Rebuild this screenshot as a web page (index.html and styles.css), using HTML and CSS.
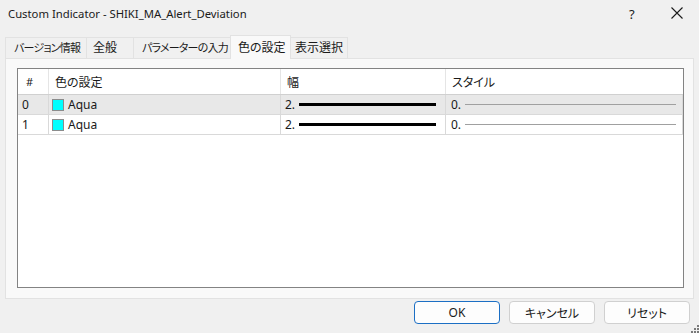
FILE: index.html
```html
<html>
<head>
<meta charset="utf-8">
<link rel="stylesheet" href="styles.css">
</head>
<body>
<div class="window">
  <div class="titlebar">
    <span class="title">Custom Indicator - SHIKI_MA_Alert_Deviation</span>
    <span class="help">?</span>
    <span class="close">
      <svg width="12" height="12" viewBox="0 0 12 12"><path d="M0.5 0.5 L11.5 11.5 M11.5 0.5 L0.5 11.5" stroke="#1a1a1a" stroke-width="1.1" fill="none"/></svg>
    </span>
  </div>

  <div class="tabs">
    <div class="tab t-version kana">バージョン情報</div>
    <div class="tab t-general">全般</div>
    <div class="tab t-params kana">パラメーターの入力</div>
    <div class="tab t-colors active">色の設定</div>
    <div class="tab t-display">表示選択</div>
  </div>

  <div class="panel">
    <div class="list">
      <div class="row head">
        <div class="cell num">#</div>
        <div class="cell color">色の設定</div>
        <div class="cell width">幅</div>
        <div class="cell style">スタイル</div>
      </div>
      <div class="row sel">
        <div class="cell num">0</div>
        <div class="cell color"><span class="swatch"></span>Aqua</div>
        <div class="cell width">2.<span class="line thick"></span></div>
        <div class="cell style">0.<span class="line thin"></span></div>
      </div>
      <div class="row">
        <div class="cell num">1</div>
        <div class="cell color"><span class="swatch"></span>Aqua</div>
        <div class="cell width">2.<span class="line thick"></span></div>
        <div class="cell style">0.<span class="line thin"></span></div>
      </div>
    </div>
  </div>

  <div class="buttons">
    <button class="btn default">OK</button>
    <button class="btn">キャンセル</button>
    <button class="btn">リセット</button>
  </div>

  <svg class="grip" width="8" height="8" viewBox="0 0 8 8">
    <rect x="6" y="0" width="2" height="2" fill="#7a7a7a"/>
    <rect x="3" y="3" width="2" height="2" fill="#7a7a7a"/>
    <rect x="6" y="3" width="2" height="2" fill="#7a7a7a"/>
    <rect x="0" y="6" width="2" height="2" fill="#7a7a7a"/>
    <rect x="3" y="6" width="2" height="2" fill="#7a7a7a"/>
    <rect x="6" y="6" width="2" height="2" fill="#7a7a7a"/>
  </svg>
</div>
</body>
</html>
```

FILE: styles.css
```css
* {
  box-sizing: border-box;
}

body {
  margin: 0;
  background: #f0f0f0;
  font-family: "Noto Sans", "Noto Sans CJK JP", sans-serif;
  font-size: 12px;
  color: #1a1a1a;
  font-feature-settings: "palt";
}

.window {
  position: relative;
  width: 699px;
  height: 333px;
  overflow: hidden;
}

/* title bar */
.titlebar {
  height: 30px;
  display: flex;
  align-items: center;
  padding-left: 8px;
}

.title {
  flex: 1;
  font-size: 11.3px;
  padding-bottom: 3px;
}

.help {
  width: 14px;
  margin-right: 28px;
  font-size: 13px;
  padding-bottom: 3px;
}

.close {
  width: 12px;
  height: 12px;
  margin-right: 16px;
  margin-bottom: 4px;
  display: flex;
}

/* tabs */
.tabs {
  display: flex;
  margin-top: 7px;
  padding-left: 5px;
  height: 21px;
  position: relative;
  z-index: 1;
}

.tab {
  height: 21px;
  line-height: 20px;
  border: 1px solid #e2e2e2;
  border-bottom: none;
  border-left: none;
  background: #f0f0f0;
  white-space: nowrap;
}

.tab.kana {
  font-size: 11px;
  letter-spacing: -0.8px;
}

.t-version { width: 82px; padding-left: 8px; border-left: 1px solid #e2e2e2; }
.t-general { width: 47px; padding-left: 6px; }
.t-params { width: 97px; padding-left: 8px; }
.t-colors { width: 61px; padding-left: 7px; }
.t-display { width: 57px; padding-left: 4px; }

.tab.active {
  height: 24px;
  margin-top: -2px;
  line-height: 23px;
  background: #f9f9f9;
  border-left: 1px solid #e2e2e2;
  margin-left: -1px;
}

/* panel */
.panel {
  margin-left: 5px;
  width: 689px;
  height: 241px;
  background: #f9f9f9;
  border: 1px solid #e2e2e2;
  padding: 9px 0 0 11px;
}

.list {
  width: 667px;
  height: 220px;
  background: #fff;
  border: 1px solid #838383;
}

.row {
  display: grid;
  grid-template-columns: 31px 232px 165px 1fr;
  height: 20px;
  border-bottom: 1px solid #d9d9d9;
}

.row.head {
  height: 26px;
  border-bottom: 1px solid #d0d0d0;
}

.row.sel {
  background: #e8e8e8;
}

.cell {
  display: flex;
  align-items: center;
  border-right: 1px solid #d9d9d9;
  white-space: nowrap;
}

.head .cell {
  border-right-color: #e5e5e5;
}

.cell.num { padding-left: 4px; }
.head .cell.num { padding-left: 8px; font-size: 11px; }
.cell.color { padding-left: 3px; }
.head .cell.color { padding-left: 6px; }
.cell.width { padding-left: 4px; }
.head .cell.width { padding-left: 6px; }
.cell.style { padding-left: 5px; }
.head .cell.style { padding-left: 6px; border-right: none; }

.swatch {
  width: 12px;
  height: 12px;
  background: #00ffff;
  border: 1px solid #8c8c8c;
  margin-right: 4px;
}

.line {
  display: block;
  margin-left: 4px;
}

.line.thick {
  width: 137px;
  height: 3px;
  background: #000;
}

.line.thin {
  width: 211px;
  height: 1px;
  background: #a0a0a0;
}

/* buttons */
.buttons {
  display: flex;
  justify-content: flex-end;
  gap: 9px;
  margin-top: 2px;
  padding-right: 9px;
}

.btn {
  width: 86px;
  height: 23px;
  font-family: inherit;
  font-size: 12px;
  font-feature-settings: "palt";
  color: #1a1a1a;
  background: #fdfdfd;
  border: 1px solid #d0d0d0;
  border-radius: 4px;
  padding: 0;
}

.btn.default {
  border-color: #1c6fc4;
}

.grip {
  position: absolute;
  right: 0;
  bottom: 0;
}
```
